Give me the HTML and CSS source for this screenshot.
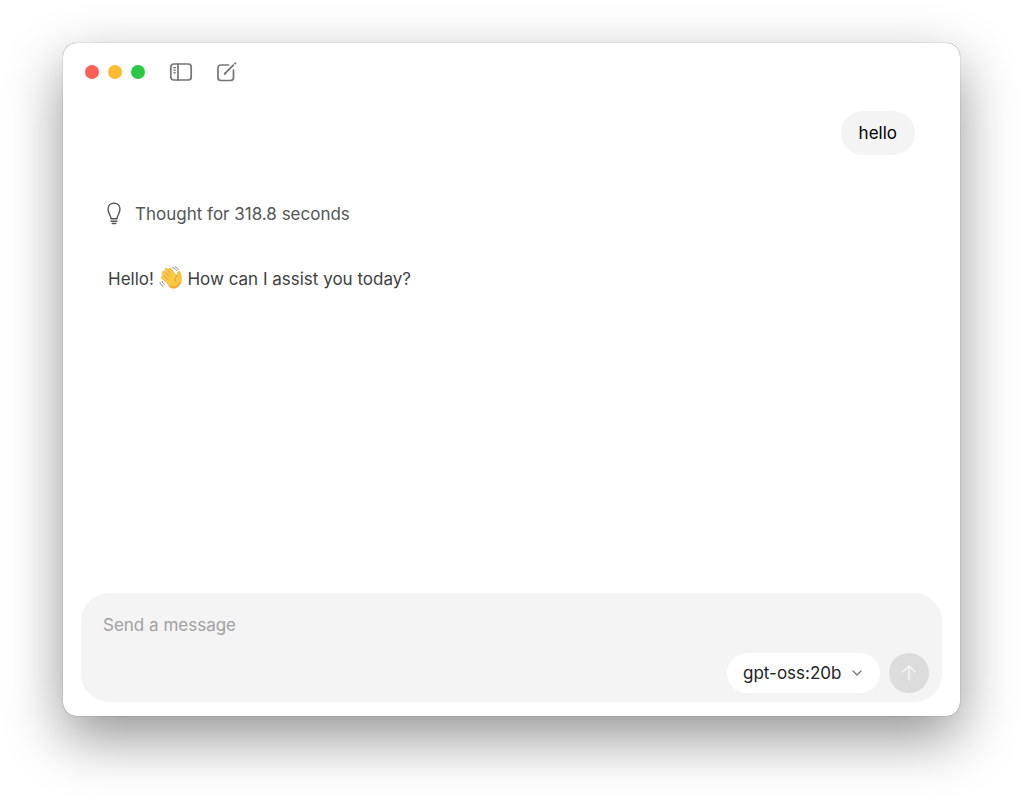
FILE: index.html
```html
<!DOCTYPE html>
<html lang="en">
    <head>
        <meta charset="UTF-8">
        <meta name="viewport" content="width=device-width, initial-scale=1.0">
        <title>Chat</title>
        <link rel="stylesheet" href="styles.css">
    </head>
    <body>
        <div class="window">
            <header class="title-bar">
                <div class="lights">
                    <button class="light close" aria-label="Close"></button>
                    <button class="light minimize" aria-label="Minimize"></button>
                    <button class="light zoom" aria-label="Zoom"></button>
                </div>
                <button class="tool" aria-label="Toggle sidebar">
                    <svg width="24" height="20" viewBox="0 0 24 20" fill="none" stroke="#747474" stroke-width="1.7" stroke-linecap="round">
                        <rect x="1.8" y="2" width="20.4" height="16" rx="3"/>
                        <path d="M9 2v16"/>
                        <path d="M4.700 5.600h1.800M4.700 8.200h1.800M4.700 10.800h1.800" stroke-width="1.200"/>
                    </svg>
                </button>
                <button class="tool" aria-label="New chat">
                    <svg width="22" height="22" viewBox="0 0 22 22" fill="none" stroke="#747474" stroke-width="1.7" stroke-linecap="round" stroke-linejoin="round">
                        <path d="M12.500 4H5a3 3 0 0 0-3 3v9.500a3 3 0 0 0 3 3h9.500a3 3 0 0 0 3-3V9"/>
                        <path d="M9.300 12.200L17.300 4.200" stroke-width="1.800"/>
                        <path d="M8.300 13.300l.5-1.600 1.100 1.100z" stroke-width=".8" fill="#747474"/>
                        <path d="M19 2.500l.3-.3" stroke-width="1.800"/>
                    </svg>
                </button>
            </header>
            <main class="messages">
                <div class="bubble">hello</div>
                <button class="thought">
                    <svg width="16" height="24" viewBox="0 0 16 24" fill="none" stroke="#555" stroke-width="1.400" stroke-linecap="round" stroke-linejoin="round">
                        <path d="M5 16.800C4.700 12.900 2 11.200 2 7.100C2 3.600 4.600 1.200 8 1.200S14 3.600 14 7.100C14 11.200 11.300 12.900 11 16.800z"/>
                        <path d="M5 19.300h6"/>
                        <path d="M6.200 21.500h3.600"/>
                    </svg>
                    Thought for 318.8 seconds
                </button>
                <p class="reply">
                    Hello!
                    <svg class="wave" role="img" aria-label="Waving hand" width="24" height="24" viewBox="0 0 24 24" fill="none" stroke-linecap="round" stroke-linejoin="round">
                        <g stroke="#e8a52c" stroke-width="3.600">
                            <path d="M12 14L4.500 7"/>
                            <path d="M14 12L7.300 4"/>
                            <path d="M16 11L11 3.800"/>
                            <path d="M11 17L4 11.500"/>
                        </g>
                        <path d="M6.500 13L15 7.500l3 2.500c.7-1.500.2-3 .8-4.200.7-1.200 2.400-.7 2.600.8.300 2 .9 4 1 6.500.2 3-1 5.400-3.200 7.400-2.400 2.200-5.800 2.400-8.400.6z" fill="#fbc540" stroke="#e8a52c" stroke-width=".6"/>
                        <g stroke="#ffcb4a" stroke-width="2.700">
                            <path d="M13 15L4.500 7"/>
                            <path d="M15 13L7.300 4"/>
                            <path d="M16.500 12L11 3.800"/>
                            <path d="M12 18L4 11.500"/>
                        </g>
                        <path d="M10.500 11L6 6.800M13 9.800L9.200 5.200M9.500 14L4.800 10" stroke="#e3a02d" stroke-width=".7"/>
                        <path d="M18 10c-1.800 1.300-2.300 3-1.600 5" stroke="#d99328" stroke-width=".8"/>
                        <path d="M11.500 20.500c3.500 2 7.500.5 9.700-3.500" stroke="#e9a72f" stroke-width="1.200"/>
                        <path d="M14 1.700c1.600.3 2.700 1.200 3.500 2.700M16.400.8c1.400.5 2.200 1.300 2.800 2.600M1 16.500c.4 1.800 1.400 3 3 3.700M3.200 15.400c.3 1.400 1 2.300 2.300 2.900" stroke="#777" stroke-width=".9"/>
                    </svg>
                    How can I assist you today?
                </p>
            </main>
            <form class="composer">
                <textarea class="message-input" rows="1" placeholder="Send a message" aria-label="Message"></textarea>
                <div class="actions">
                    <div class="model">
                        <select class="model-select" aria-label="Model">
                            <option>gpt-oss:20b</option>
                        </select>
                        <svg class="chevron" width="12" height="8" viewBox="0 0 12 8" fill="none" stroke="#777" stroke-width="1.300" stroke-linecap="round" stroke-linejoin="round">
                            <path d="M2 2l4 4 4-4"/>
                        </svg>
                    </div>
                    <button class="send" type="button" aria-label="Send">
                        <svg width="16" height="18" viewBox="0 0 16 18" fill="none" stroke="#f4f4f4" stroke-width="1.600" stroke-linecap="round" stroke-linejoin="round">
                            <path d="M8 16V2M2.200 7.800L8 2l5.800 5.800"/>
                        </svg>
                    </button>
                </div>
            </form>
        </div>
    </body>
</html>
```
FILE: styles.css
```css
*{
    box-sizing: border-box;
    margin: 0;
    padding: 0;
}
body{
    display: flex;
    min-height: 100vh;
    padding: 43px 63px 83px;
    background-color: #fff;
    font-family: Inter, "Liberation Sans", sans-serif;
    font-size: 17px;
    line-height: 24px;
}
button, select, textarea{
    border: 0;
    background: none;
    font: inherit;
    color: inherit;
}
svg{
    display: block;
}
.window{
    display: flex;
    flex: 1;
    flex-direction: column;
    padding: 0 18px 14px;
    border-radius: 14px;
    background-color: #fff;
    box-shadow: 0 0 1px rgba(0, 0, 0, .6), 0 22px 56px rgba(0, 0, 0, .42);
}
.title-bar{
    display: flex;
    align-items: center;
    height: 58px;
    padding-left: 4px;
}
.lights{
    display: flex;
    gap: 9px;
    margin-right: 24px;
}
.light{
    width: 14px;
    height: 14px;
    border-radius: 50%;
}
.close{
    background-color: #ff5f57;
}
.minimize{
    background-color: #febc2e;
}
.zoom{
    background-color: #28c840;
}
.tool{
    margin-right: 23px;
}
.messages{
    display: flex;
    flex: 1;
    flex-direction: column;
    align-items: flex-start;
    padding: 10px 27px 0;
}
.bubble{
    align-self: flex-end;
    padding: 10px 18px;
    border-radius: 22px;
    background-color: #f4f4f4;
    color: #000;
}
.thought{
    display: flex;
    align-items: center;
    gap: 13px;
    margin: 47px 0 40px -2px;
    color: #555;
}
.reply{
    color: #404040;
}
.wave{
    display: inline-block;
    vertical-align: -5px;
}
.composer{
    padding: 20px 13px 9px 22px;
    border-radius: 28px;
    background-color: #f4f4f4;
}
.message-input{
    display: block;
    width: 100%;
    resize: none;
    outline: none;
}
.message-input::placeholder{
    color: #a1a1a1;
}
.actions{
    display: flex;
    justify-content: flex-end;
    gap: 9px;
    margin-top: 16px;
}
.model{
    display: grid;
    align-items: center;
    border-radius: 20px;
    background-color: #fff;
    color: #222;
}
.model-select{
    grid-area: 1 / 1;
    height: 40px;
    padding: 0 38px 0 16px;
    appearance: none;
}
.chevron{
    grid-area: 1 / 1;
    justify-self: end;
    margin-right: 17px;
    pointer-events: none;
}
.send{
    display: flex;
    align-items: center;
    justify-content: center;
    width: 40px;
    height: 40px;
    border-radius: 50%;
    background-color: #dcdcdc;
}
```
